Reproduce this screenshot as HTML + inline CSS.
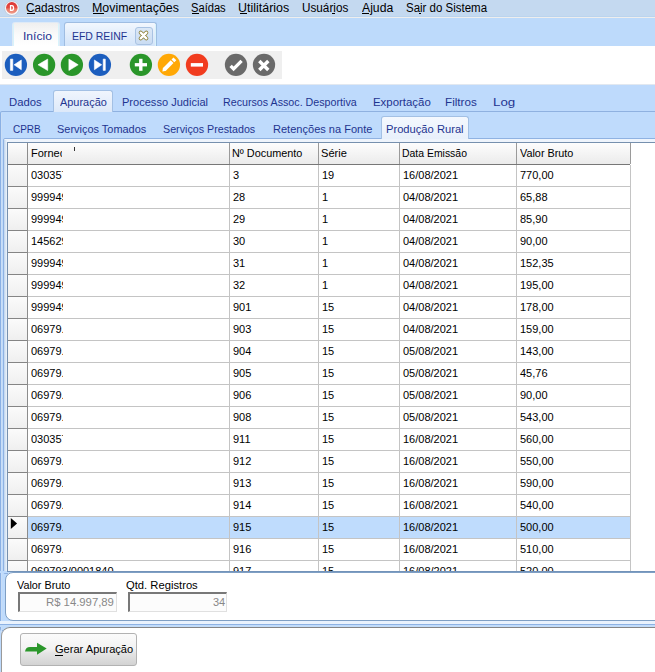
<!DOCTYPE html>
<html><head><meta charset="utf-8">
<style>
*{margin:0;padding:0;box-sizing:border-box}
html,body{width:655px;height:672px;overflow:hidden;background:#fff;font-family:"Liberation Sans",sans-serif;font-size:11px;color:#000}
.a{position:absolute}
.t{position:absolute;white-space:nowrap;line-height:14px;font-size:11px}
u{text-decoration:none;position:relative}
.hdr{background:linear-gradient(#fdfdfd,#f4f4f4 50%,#ebebeb)}
.ind{background:linear-gradient(#fbfbfb,#efefef)}
.hl{height:1px;background:#c4c4c4}
.vl{width:1px;background:#c4c4c4}
</style></head><body>
<div class="a" style="left:0;top:0;width:655px;height:17px;background:#c4d9f0"></div>
<div class="a" style="left:0;top:16px;width:655px;height:1px;background:#bbd4ee"></div>
<div class="a" style="left:0;top:17px;width:655px;height:1px;background:#eeeeee"></div>
<svg class="a" style="left:4px;top:0px" width="16" height="17" viewBox="0 0 16 17">
<defs><linearGradient id="dg" x1="0" y1="0" x2="0" y2="1"><stop offset="0" stop-color="#dc3434"/><stop offset="0.5" stop-color="#e44a42"/><stop offset="0.58" stop-color="#ea7664"/><stop offset="1" stop-color="#f09a88"/></linearGradient></defs>
<circle cx="7.9" cy="8.2" r="7.3" fill="#f7f9fc" stroke="#b9c4d2" stroke-width="0.7"/>
<circle cx="7.8" cy="7.9" r="5.8" fill="url(#dg)"/>
<path fill-rule="evenodd" d="M5.9 4.9 H8 Q10.2 4.9 10.2 7.95 Q10.2 11 8 11 H5.9 Z M7.2 6.2 V9.7 H7.9 Q8.9 9.7 8.9 7.95 Q8.9 6.2 7.9 6.2 Z" fill="#fff"/>
</svg>
<div class="t" style="left:26.42px;top:1px;font-size:12px;color:#000;transform:scaleX(0.9808);transform-origin:0 0;">Cadastros</div>
<div class="t" style="left:91.97px;top:1px;font-size:12px;color:#000;transform:scaleX(1.0341);transform-origin:0 0;">Movimentações</div>
<div class="t" style="left:191.27px;top:1px;font-size:12px;color:#000;transform:scaleX(0.9286);transform-origin:0 0;">Saídas</div>
<div class="t" style="left:238.36px;top:1px;font-size:12px;color:#000;transform:scaleX(1.0383);transform-origin:0 0;">Utilitários</div>
<div class="t" style="left:302.42px;top:1px;font-size:12px;color:#000;transform:scaleX(0.9778);transform-origin:0 0;">Usuários</div>
<div class="t" style="left:362.00px;top:1px;font-size:12px;color:#000;transform:scaleX(1.0167);transform-origin:0 0;">Ajuda</div>
<div class="t" style="left:406.24px;top:1px;font-size:12px;color:#000;transform:scaleX(0.9566);transform-origin:0 0;">Sair do Sistema</div>
<div class="a" style="left:27px;top:13px;width:8px;height:1px;background:#000"></div>
<div class="a" style="left:93px;top:13px;width:11px;height:1px;background:#000"></div>
<div class="a" style="left:192px;top:13px;width:7px;height:1px;background:#000"></div>
<div class="a" style="left:240px;top:13px;width:7px;height:1px;background:#000"></div>
<div class="a" style="left:332px;top:13px;width:3px;height:1px;background:#000"></div>
<div class="a" style="left:362px;top:13px;width:7px;height:1px;background:#000"></div>
<div class="a" style="left:419px;top:13px;width:2px;height:1px;background:#000"></div>
<div class="a" style="left:0;top:18px;width:655px;height:28px;background:#bddafb"></div>
<div class="a" style="left:12px;top:22px;width:48px;height:24px;border:1px solid #dfeaf6;border-bottom:none;border-radius:3px 3px 0 0;background:linear-gradient(#efefef,#fafafa 50%,#fff)"></div>
<div class="a" style="left:13px;top:24px;width:1px;height:22px;background:#d8f3fb"></div><div class="a" style="left:58px;top:24px;width:1px;height:22px;background:#d8f3fb"></div>
<div class="t" style="left:22.90px;top:29px;font-size:11px;color:#1e3490;transform:scaleX(1.1000);transform-origin:0 0;">Início</div>
<div class="a" style="left:64px;top:22px;width:93px;height:24px;border:1px solid #9fbde2;border-bottom:none;border-radius:3px 3px 0 0;background:linear-gradient(#f2f7fe,#e3eefb 45%,#d4e5fa)"></div>
<div class="a" style="left:155px;top:24px;width:1px;height:22px;background:#d8f3fb"></div>
<div class="t" style="left:71.85px;top:29px;font-size:11px;color:#1e3490;transform:scaleX(0.9500);transform-origin:0 0;">EFD REINF</div>
<div class="a" style="left:135px;top:27px;width:18px;height:18px;border:1px solid #a9c3e3;border-radius:3px;background:linear-gradient(#dbe8f7,#cadcf2)"></div>
<svg class="a" style="left:137px;top:29px" width="13" height="13" viewBox="0 0 13 13"><path d="M3.7 3.7 L9.3 9.3 M9.3 3.7 L3.7 9.3" stroke="#8a7d33" stroke-width="4" stroke-linecap="round"/><path d="M3.7 3.7 L9.3 9.3 M9.3 3.7 L3.7 9.3" stroke="#fff" stroke-width="2.4" stroke-linecap="round"/></svg>
<div class="a" style="left:0;top:46px;width:655px;height:38px;background:#fff"></div>
<div class="a" style="left:2px;top:51px;width:280px;height:28px;background:#efefef"></div>
<svg class="a" style="left:0;top:51px" width="282" height="28" viewBox="0 51 282 28">
<circle cx="15.9" cy="64.8" r="11.15" fill="#1c5ebe"/>
<circle cx="44.1" cy="64.8" r="11.15" fill="#2a962a"/>
<circle cx="71.9" cy="64.8" r="11.15" fill="#2a962a"/>
<circle cx="99.9" cy="64.8" r="11.15" fill="#1c5ebe"/>
<circle cx="140.9" cy="64.8" r="11.15" fill="#2a962a"/>
<circle cx="168.9" cy="64.8" r="11.15" fill="#ffa806"/>
<circle cx="197" cy="64.8" r="11.15" fill="#f13c1f"/>
<circle cx="236" cy="64.8" r="11.15" fill="#6a6a6a"/>
<circle cx="264" cy="64.8" r="11.15" fill="#6a6a6a"/>
<g fill="#fff" stroke="#fff" stroke-width="0.6" stroke-linejoin="round">
<rect x="10.4" y="59.1" width="2.4" height="11.3"/>
<path d="M21.3 60 L14.1 64.8 L21.3 69.7 Z"/>
<path d="M47.7 59.1 L38 64.8 L47.7 70.5 Z"/>
<path d="M68.9 59.1 L78.2 64.8 L68.9 70.5 Z"/>
<path d="M94.4 60 L101.7 64.8 L94.4 69.7 Z"/>
<rect x="103.2" y="59.1" width="2.1" height="11.3"/>
</g>
<g fill="#fff">
<rect x="134.8" y="63.1" width="12.2" height="3.3"/>
<rect x="139.1" y="58.8" width="3.4" height="12"/>
<rect x="190.8" y="63.1" width="12.2" height="3.5"/>
</g>
<path d="M164.2 69.6 L172.1 61.7" stroke="#fff" stroke-width="4" fill="none"/>
<path d="M162.4 71.4 L163 67.6 L166.2 70.8 Z" fill="#fff"/>
<path d="M172.9 60.9 L174.9 58.9" stroke="#fff" stroke-width="4" fill="none"/>
<path d="M230.6 65.8 L233.6 68.8 L241.6 60.8" stroke="#fff" stroke-width="3.3" fill="none"/>
<path d="M259.3 61 L268.3 70 M268.3 61 L259.3 70" stroke="#fff" stroke-width="3.4" fill="none"/>
</svg>
<div class="a" style="left:0;top:84px;width:655px;height:588px;background:#bedafc"></div>
<div class="a" style="left:0;top:84px;width:655px;height:1px;background:#e2e8f0"></div>
<div class="a" style="left:0px;top:111px;width:700px;height:520px;border:1px solid #8fb1e0;border-left-color:#8ab0e4;border-radius:2px;background:#bfdbfc"></div>
<div class="a" style="left:1px;top:113px;width:1px;height:520px;background:#cadef6"></div>
<div class="a" style="left:53px;top:90px;width:60px;height:22px;border:1px solid #a3c0e4;border-bottom:none;border-radius:3px 3px 0 0;background:linear-gradient(#f0f5fd,#dde9f9)"></div>
<div class="t" style="left:9.37px;top:95px;font-size:11px;color:#1e3490;transform:scaleX(1.0267);transform-origin:0 0;">Dados</div>
<div class="t" style="left:59.50px;top:95px;font-size:11px;color:#1e3490;transform:scaleX(0.9935);transform-origin:0 0;">Apuração</div>
<div class="t" style="left:122.10px;top:95px;font-size:11px;color:#1e3490;transform:scaleX(1.0048);transform-origin:0 0;">Processo Judicial</div>
<div class="t" style="left:222.93px;top:95px;font-size:11px;color:#1e3490;transform:scaleX(0.9721);transform-origin:0 0;">Recursos Assoc. Desportiva</div>
<div class="t" style="left:372.96px;top:95px;font-size:11px;color:#1e3490;transform:scaleX(1.0377);transform-origin:0 0;">Exportação</div>
<div class="t" style="left:445.24px;top:95px;font-size:11px;color:#1e3490;transform:scaleX(1.0607);transform-origin:0 0;">Filtros</div>
<div class="t" style="left:492.79px;top:95px;font-size:11px;color:#1e3490;transform:scaleX(1.2125);transform-origin:0 0;">Log</div>
<div class="a" style="left:3px;top:138px;width:700px;height:436px;border:1px solid #8fb2e2;border-radius:2px;background:#eef4fc"></div>
<div class="a" style="left:4px;top:140px;width:3px;height:432px;background:linear-gradient(to right,#bfd4ee,#d8e6f5,#eef4fc)"></div>
<div class="a" style="left:381px;top:116px;width:88px;height:23px;border:1px solid #a3c0e4;border-bottom:none;border-radius:3px 3px 0 0;background:linear-gradient(#f4f8fe,#e8f0fb)"></div>
<div class="t" style="left:12.79px;top:122px;font-size:11px;color:#1e3490;transform:scaleX(0.9071);transform-origin:0 0;">CPRB</div>
<div class="t" style="left:57.40px;top:122px;font-size:11px;color:#1e3490;transform:scaleX(0.9955);transform-origin:0 0;">Serviços Tomados</div>
<div class="t" style="left:163.43px;top:122px;font-size:11px;color:#1e3490;transform:scaleX(0.9731);transform-origin:0 0;">Serviços Prestados</div>
<div class="t" style="left:272.60px;top:122px;font-size:11px;color:#1e3490;transform:scaleX(1.0041);transform-origin:0 0;">Retenções na Fonte</div>
<div class="t" style="left:386.39px;top:122px;font-size:11px;color:#1e3490;transform:scaleX(1.0149);transform-origin:0 0;">Produção Rural</div>
<div class="a" style="left:7px;top:142px;width:700px;height:430px;background:#fff;border:1px solid #7690ae"></div>
<div class="a hdr" style="left:8px;top:143px;width:622px;height:21px"></div>
<div class="a" style="left:8px;top:164px;width:622px;height:1px;background:#777"></div>
<div class="a ind" style="left:8px;top:165px;width:19px;height:21px"></div>
<div class="a hl" style="left:28px;top:186px;width:602px"></div>
<div class="a" style="left:8px;top:186px;width:19px;height:1px;background:#858585"></div>
<div class="t" style="left:31px;top:168px;width:32px;overflow:hidden">030357000000</div>
<div class="t" style="left:233px;top:168px">3</div>
<div class="t" style="left:322px;top:168px">19</div>
<div class="t" style="left:403px;top:168px">16/08/2021</div>
<div class="t" style="left:520px;top:168px">770,00</div>
<div class="a ind" style="left:8px;top:187px;width:19px;height:21px"></div>
<div class="a hl" style="left:28px;top:208px;width:602px"></div>
<div class="a" style="left:8px;top:208px;width:19px;height:1px;background:#858585"></div>
<div class="t" style="left:31px;top:190px;width:32px;overflow:hidden">999949000000</div>
<div class="t" style="left:233px;top:190px">28</div>
<div class="t" style="left:322px;top:190px">1</div>
<div class="t" style="left:403px;top:190px">04/08/2021</div>
<div class="t" style="left:520px;top:190px">65,88</div>
<div class="a ind" style="left:8px;top:209px;width:19px;height:21px"></div>
<div class="a hl" style="left:28px;top:230px;width:602px"></div>
<div class="a" style="left:8px;top:230px;width:19px;height:1px;background:#858585"></div>
<div class="t" style="left:31px;top:212px;width:32px;overflow:hidden">999949000000</div>
<div class="t" style="left:233px;top:212px">29</div>
<div class="t" style="left:322px;top:212px">1</div>
<div class="t" style="left:403px;top:212px">04/08/2021</div>
<div class="t" style="left:520px;top:212px">85,90</div>
<div class="a ind" style="left:8px;top:231px;width:19px;height:21px"></div>
<div class="a hl" style="left:28px;top:252px;width:602px"></div>
<div class="a" style="left:8px;top:252px;width:19px;height:1px;background:#858585"></div>
<div class="t" style="left:31px;top:234px;width:32px;overflow:hidden">145629000000</div>
<div class="t" style="left:233px;top:234px">30</div>
<div class="t" style="left:322px;top:234px">1</div>
<div class="t" style="left:403px;top:234px">04/08/2021</div>
<div class="t" style="left:520px;top:234px">90,00</div>
<div class="a ind" style="left:8px;top:253px;width:19px;height:21px"></div>
<div class="a hl" style="left:28px;top:274px;width:602px"></div>
<div class="a" style="left:8px;top:274px;width:19px;height:1px;background:#858585"></div>
<div class="t" style="left:31px;top:256px;width:32px;overflow:hidden">999949000000</div>
<div class="t" style="left:233px;top:256px">31</div>
<div class="t" style="left:322px;top:256px">1</div>
<div class="t" style="left:403px;top:256px">04/08/2021</div>
<div class="t" style="left:520px;top:256px">152,35</div>
<div class="a ind" style="left:8px;top:275px;width:19px;height:21px"></div>
<div class="a hl" style="left:28px;top:296px;width:602px"></div>
<div class="a" style="left:8px;top:296px;width:19px;height:1px;background:#858585"></div>
<div class="t" style="left:31px;top:278px;width:32px;overflow:hidden">999949000000</div>
<div class="t" style="left:233px;top:278px">32</div>
<div class="t" style="left:322px;top:278px">1</div>
<div class="t" style="left:403px;top:278px">04/08/2021</div>
<div class="t" style="left:520px;top:278px">195,00</div>
<div class="a ind" style="left:8px;top:297px;width:19px;height:21px"></div>
<div class="a hl" style="left:28px;top:318px;width:602px"></div>
<div class="a" style="left:8px;top:318px;width:19px;height:1px;background:#858585"></div>
<div class="t" style="left:31px;top:300px;width:32px;overflow:hidden">999949000000</div>
<div class="t" style="left:233px;top:300px">901</div>
<div class="t" style="left:322px;top:300px">15</div>
<div class="t" style="left:403px;top:300px">04/08/2021</div>
<div class="t" style="left:520px;top:300px">178,00</div>
<div class="a ind" style="left:8px;top:319px;width:19px;height:21px"></div>
<div class="a hl" style="left:28px;top:340px;width:602px"></div>
<div class="a" style="left:8px;top:340px;width:19px;height:1px;background:#858585"></div>
<div class="t" style="left:31px;top:322px;width:32px;overflow:hidden">06979.000000</div>
<div class="t" style="left:233px;top:322px">903</div>
<div class="t" style="left:322px;top:322px">15</div>
<div class="t" style="left:403px;top:322px">04/08/2021</div>
<div class="t" style="left:520px;top:322px">159,00</div>
<div class="a ind" style="left:8px;top:341px;width:19px;height:21px"></div>
<div class="a hl" style="left:28px;top:362px;width:602px"></div>
<div class="a" style="left:8px;top:362px;width:19px;height:1px;background:#858585"></div>
<div class="t" style="left:31px;top:344px;width:32px;overflow:hidden">06979.000000</div>
<div class="t" style="left:233px;top:344px">904</div>
<div class="t" style="left:322px;top:344px">15</div>
<div class="t" style="left:403px;top:344px">05/08/2021</div>
<div class="t" style="left:520px;top:344px">143,00</div>
<div class="a ind" style="left:8px;top:363px;width:19px;height:21px"></div>
<div class="a hl" style="left:28px;top:384px;width:602px"></div>
<div class="a" style="left:8px;top:384px;width:19px;height:1px;background:#858585"></div>
<div class="t" style="left:31px;top:366px;width:32px;overflow:hidden">06979.000000</div>
<div class="t" style="left:233px;top:366px">905</div>
<div class="t" style="left:322px;top:366px">15</div>
<div class="t" style="left:403px;top:366px">05/08/2021</div>
<div class="t" style="left:520px;top:366px">45,76</div>
<div class="a ind" style="left:8px;top:385px;width:19px;height:21px"></div>
<div class="a hl" style="left:28px;top:406px;width:602px"></div>
<div class="a" style="left:8px;top:406px;width:19px;height:1px;background:#858585"></div>
<div class="t" style="left:31px;top:388px;width:32px;overflow:hidden">06979.000000</div>
<div class="t" style="left:233px;top:388px">906</div>
<div class="t" style="left:322px;top:388px">15</div>
<div class="t" style="left:403px;top:388px">05/08/2021</div>
<div class="t" style="left:520px;top:388px">90,00</div>
<div class="a ind" style="left:8px;top:407px;width:19px;height:21px"></div>
<div class="a hl" style="left:28px;top:428px;width:602px"></div>
<div class="a" style="left:8px;top:428px;width:19px;height:1px;background:#858585"></div>
<div class="t" style="left:31px;top:410px;width:32px;overflow:hidden">06979.000000</div>
<div class="t" style="left:233px;top:410px">908</div>
<div class="t" style="left:322px;top:410px">15</div>
<div class="t" style="left:403px;top:410px">05/08/2021</div>
<div class="t" style="left:520px;top:410px">543,00</div>
<div class="a ind" style="left:8px;top:429px;width:19px;height:21px"></div>
<div class="a hl" style="left:28px;top:450px;width:602px"></div>
<div class="a" style="left:8px;top:450px;width:19px;height:1px;background:#858585"></div>
<div class="t" style="left:31px;top:432px;width:32px;overflow:hidden">030357000000</div>
<div class="t" style="left:233px;top:432px">911</div>
<div class="t" style="left:322px;top:432px">15</div>
<div class="t" style="left:403px;top:432px">16/08/2021</div>
<div class="t" style="left:520px;top:432px">560,00</div>
<div class="a ind" style="left:8px;top:451px;width:19px;height:21px"></div>
<div class="a hl" style="left:28px;top:472px;width:602px"></div>
<div class="a" style="left:8px;top:472px;width:19px;height:1px;background:#858585"></div>
<div class="t" style="left:31px;top:454px;width:32px;overflow:hidden">06979.000000</div>
<div class="t" style="left:233px;top:454px">912</div>
<div class="t" style="left:322px;top:454px">15</div>
<div class="t" style="left:403px;top:454px">16/08/2021</div>
<div class="t" style="left:520px;top:454px">550,00</div>
<div class="a ind" style="left:8px;top:473px;width:19px;height:21px"></div>
<div class="a hl" style="left:28px;top:494px;width:602px"></div>
<div class="a" style="left:8px;top:494px;width:19px;height:1px;background:#858585"></div>
<div class="t" style="left:31px;top:476px;width:32px;overflow:hidden">06979.000000</div>
<div class="t" style="left:233px;top:476px">913</div>
<div class="t" style="left:322px;top:476px">15</div>
<div class="t" style="left:403px;top:476px">16/08/2021</div>
<div class="t" style="left:520px;top:476px">590,00</div>
<div class="a ind" style="left:8px;top:495px;width:19px;height:21px"></div>
<div class="a hl" style="left:28px;top:516px;width:602px"></div>
<div class="a" style="left:8px;top:516px;width:19px;height:1px;background:#858585"></div>
<div class="t" style="left:31px;top:498px;width:32px;overflow:hidden">06979.000000</div>
<div class="t" style="left:233px;top:498px">914</div>
<div class="t" style="left:322px;top:498px">15</div>
<div class="t" style="left:403px;top:498px">16/08/2021</div>
<div class="t" style="left:520px;top:498px">540,00</div>
<div class="a" style="left:28px;top:517px;width:602px;height:21px;background:#bfdcfd"></div>
<div class="a ind" style="left:8px;top:517px;width:19px;height:21px"></div>
<div class="a hl" style="left:28px;top:538px;width:602px"></div>
<div class="a" style="left:8px;top:538px;width:19px;height:1px;background:#858585"></div>
<svg class="a" style="left:10px;top:517px" width="9" height="16"><path d="M0.8 1 L7.1 6.5 L0.8 12.1 Z" fill="#000"/></svg>
<div class="t" style="left:31px;top:520px;width:32px;overflow:hidden">06979.000000</div>
<div class="t" style="left:233px;top:520px">915</div>
<div class="t" style="left:322px;top:520px">15</div>
<div class="t" style="left:403px;top:520px">16/08/2021</div>
<div class="t" style="left:520px;top:520px">500,00</div>
<div class="a ind" style="left:8px;top:539px;width:19px;height:21px"></div>
<div class="a hl" style="left:28px;top:560px;width:602px"></div>
<div class="a" style="left:8px;top:560px;width:19px;height:1px;background:#858585"></div>
<div class="t" style="left:31px;top:542px;width:32px;overflow:hidden">06979.000000</div>
<div class="t" style="left:233px;top:542px">916</div>
<div class="t" style="left:322px;top:542px">15</div>
<div class="t" style="left:403px;top:542px">16/08/2021</div>
<div class="t" style="left:520px;top:542px">510,00</div>
<div class="a ind" style="left:8px;top:561px;width:19px;height:21px"></div>
<div class="a hl" style="left:28px;top:582px;width:602px"></div>
<div class="a" style="left:8px;top:582px;width:19px;height:1px;background:#858585"></div>
<div class="t" style="left:31px;top:564px">069793/0001840</div>
<div class="t" style="left:233px;top:564px">917</div>
<div class="t" style="left:322px;top:564px">15</div>
<div class="t" style="left:403px;top:564px">16/08/2021</div>
<div class="t" style="left:520px;top:564px">520,00</div>
<div class="a" style="left:27px;top:143px;width:1px;height:428px;background:#8c8c8c"></div>
<div class="a" style="left:229px;top:143px;width:1px;height:21px;background:#9a9a9a"></div>
<div class="a vl" style="left:229px;top:165px;height:406px"></div>
<div class="a" style="left:318px;top:143px;width:1px;height:21px;background:#9a9a9a"></div>
<div class="a vl" style="left:318px;top:165px;height:406px"></div>
<div class="a" style="left:399px;top:143px;width:1px;height:21px;background:#9a9a9a"></div>
<div class="a vl" style="left:399px;top:165px;height:406px"></div>
<div class="a" style="left:516px;top:143px;width:1px;height:21px;background:#9a9a9a"></div>
<div class="a vl" style="left:516px;top:165px;height:406px"></div>
<div class="a" style="left:630px;top:143px;width:1px;height:21px;background:#9a9a9a"></div>
<div class="a vl" style="left:630px;top:165px;height:406px"></div>
<div class="t" style="left:31px;top:146px;width:31px;overflow:hidden">Fornecedor</div>
<div class="a" style="left:74px;top:147px;width:1px;height:4px;background:#333"></div>
<div class="t" style="left:231.91px;top:146px;font-size:11px;color:#000;transform:scaleX(0.9870);transform-origin:0 0;">Nº Documento</div>
<div class="t" style="left:320.69px;top:146px;font-size:11px;color:#000;transform:scaleX(1.0087);transform-origin:0 0;">Série</div>
<div class="t" style="left:402.35px;top:146px;font-size:11px;color:#000;transform:scaleX(0.9485);transform-origin:0 0;">Data Emissão</div>
<div class="t" style="left:519.90px;top:146px;font-size:11px;color:#000;transform:scaleX(0.9849);transform-origin:0 0;">Valor Bruto</div>
<div class="a" style="left:0;top:571px;width:655px;height:2px;background:#bfdbfc"></div>
<div class="a" style="left:7px;top:571px;width:660px;height:1px;background:#7393b9"></div>
<div class="a" style="left:5px;top:572px;width:700px;height:49px;border:1px solid #7f9fc4;border-radius:8px;background:#fff"></div>
<div class="t" style="left:16.90px;top:578px;font-size:11px;color:#000;transform:scaleX(0.9830);transform-origin:0 0;">Valor Bruto</div>
<div class="t" style="left:126.40px;top:578px;font-size:11px;color:#000;transform:scaleX(1.0203);transform-origin:0 0;">Qtd. Registros</div>
<div class="a" style="left:18px;top:592px;width:99px;height:20px;border:1px solid #e0e0e0;border-top:2px solid #787878;border-left:2px solid #787878;background:#fcfcfc"></div>
<div class="t" style="left:46.17px;top:595px;font-size:11px;color:#888;transform:scaleX(1.0281);transform-origin:0 0;">R$ 14.997,89</div>
<div class="a" style="left:128px;top:592px;width:99px;height:20px;border:1px solid #e0e0e0;border-top:2px solid #787878;border-left:2px solid #787878;background:#fcfcfc"></div>
<div class="t" style="left:213.00px;top:595px;font-size:11px;color:#888;">34</div>
<div class="a" style="left:0;top:621px;width:655px;height:3px;background:#e9f2fd"></div>
<div class="a" style="left:0;top:624px;width:655px;height:1px;background:#8db2e4"></div>
<div class="a" style="left:0;top:625px;width:655px;height:2px;background:#c2dcfa"></div>
<div class="a" style="left:1px;top:627px;width:700px;height:60px;border:1px solid #858585;border-left-color:#9a9a9a;border-radius:9px;background:#fff"></div>
<div class="a" style="left:20px;top:633px;width:117px;height:33px;border:1px solid #b2b2b2;border-radius:3px;background:linear-gradient(#fbfbfb,#f2f2f2 48%,#e4e4e4 62%,#d3d3d3)"></div>
<svg class="a" style="left:24px;top:641px" width="24" height="16" viewBox="0 0 24 16"><path d="M1 10.4 Q1.8 6.1 6 6.1 L13 6.1 L13 1.8 L22.7 7.4 L13 13.7 L13 10.4 Z" fill="#2b972b"/></svg>
<div class="t" style="left:54.80px;top:642px;font-size:11px;color:#000;transform:scaleX(1.0066);transform-origin:0 0;">Gerar Apuração</div>
<div class="a" style="left:55px;top:655px;width:8px;height:1px;background:#000"></div>
</body></html>
